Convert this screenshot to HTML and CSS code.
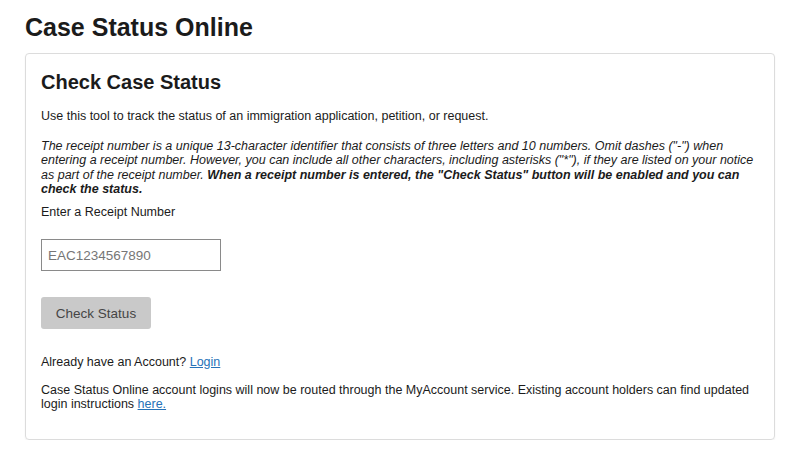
FILE: index.html
```html
<!DOCTYPE html>
<html lang="en">
<head>
    <meta charset="UTF-8">
    <meta name="viewport" content="width=device-width, initial-scale=1.0">
    <title>Case Status Online</title>
    <link rel="stylesheet" href="styles.css">
</head>
<body>
    <h1 class="page-title">Case Status Online</h1>

    <div class="status-card">
        <h2>Check Case Status</h2>

        <p class="intro">Use this tool to track the status of an immigration application, petition, or request.</p>

        <p class="hint">The receipt number is a unique 13-character identifier that consists of three letters and 10 numbers. Omit dashes ("-") when entering a receipt number. However, you can include all other characters, including asterisks ("*"), if they are listed on your notice as part of the receipt number. <strong>When a receipt number is entered, the "Check Status" button will be enabled and you can check the status.</strong></p>

        <label class="field-label" for="receiptInput">Enter a Receipt Number</label>
        <input type="text" id="receiptInput" class="receipt-input" placeholder="EAC1234567890">

        <button class="check-btn" disabled>Check Status</button>

        <p class="account">Already have an Account? <a href="#">Login</a></p>

        <p class="notice">Case Status Online account logins will now be routed through the MyAccount service. Existing account holders can find updated login instructions <a href="#">here.</a></p>
    </div>
</body>
</html>
```

FILE: styles.css
```css
* {
    box-sizing: border-box;
    margin: 0;
    padding: 0;
    font-family: 'Liberation Sans', Arial, sans-serif;
}

body {
    background: #ffffff;
    color: #1b1b1b;
    padding: 13px 25px 0;
}

.page-title {
    font-size: 25px;
    font-weight: bold;
    line-height: 29px;
    margin-bottom: 11px;
}

.status-card {
    border: 1px solid #dcdcdc;
    border-radius: 4px;
    box-shadow: 0 1px 2px rgba(0, 0, 0, 0.06);
    padding: 16px 15px 27px;
    display: flex;
    flex-direction: column;
    align-items: flex-start;
}

.status-card h2 {
    font-size: 20px;
    font-weight: bold;
    line-height: 24px;
    margin-bottom: 15px;
}

.intro,
.hint,
.field-label,
.account,
.notice {
    font-size: 12.5px;
    line-height: 14.5px;
}

.intro {
    margin-bottom: 15px;
}

.hint {
    font-style: italic;
    margin-bottom: 8px;
}

.receipt-input {
    width: 180px;
    height: 32px;
    margin-top: 20px;
    padding: 0 6px;
    border: 1px solid #8a8a8a;
    border-radius: 0;
    font-size: 13.5px;
    color: #1b1b1b;
}

.receipt-input::placeholder {
    color: #767676;
}

.check-btn {
    margin-top: 26px;
    width: 110px;
    height: 32px;
    background: #c9c9c9;
    color: #454545;
    border: none;
    border-radius: 3px;
    font-size: 13.5px;
}

.account {
    margin-top: 26px;
    margin-bottom: 13px;
}

a {
    color: #2672b8;
    text-decoration: underline;
}

.notice {
    margin-bottom: 0;
}
```
